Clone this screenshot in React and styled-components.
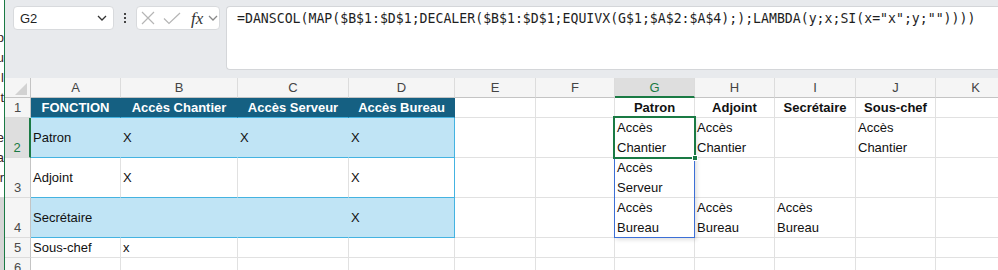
import React from 'react';
import styled, { createGlobalStyle } from 'styled-components';

const Global = createGlobalStyle`
  html, body { margin: 0; padding: 0; background: #fff; overflow: hidden; }
  body { font-family: "Liberation Sans", Arial, sans-serif; }
  * { box-sizing: border-box; }
`;

const Page = styled.div`
  display: flex;
  width: 998px;
  height: 270px;
  overflow: hidden;
`;

const Strip = styled.div`
  width: 5px;
  flex: none;
  display: flex;
  flex-direction: column;
  border-right: 1px solid #1a7a44;
`;

const StripTop = styled.div`
  height: 197px;
  background: #fff;
  overflow: hidden;
`;

const StripBottom = styled.div`
  flex: 1;
  background: #d6d6d6;
`;

const StripText = styled.div`
  width: 14px;
  margin-left: -10px;
  padding-top: 28px;
  text-align: right;
  font-size: 13px;
  line-height: 20px;
  color: #3a1c1c;
`;

const Main = styled.div`
  flex: 1;
  min-width: 0;
  display: flex;
  flex-direction: column;
  overflow: hidden;
`;

const TopBar = styled.div`
  height: 78px;
  flex: none;
  background: #e8eaed;
  display: flex;
  align-items: flex-start;
  padding: 6px 0 0 8px;
`;

const NameBox = styled.div`
  width: 101px;
  height: 24px;
  flex: none;
  background: #fff;
  border: 1px solid #d8dadd;
  border-radius: 4px;
  display: flex;
  align-items: center;
  justify-content: space-between;
  padding: 0 6px 0 6px;
  font-size: 13px;
  color: #1f1f1f;
`;

const MoreDots = styled.div`
  width: 22px;
  height: 24px;
  flex: none;
  display: flex;
  flex-direction: column;
  align-items: center;
  justify-content: center;
  gap: 2px;
`;

const Dot = styled.span`
  width: 2px;
  height: 2px;
  background: #444;
`;

const FxGroup = styled.div`
  width: 84px;
  height: 24px;
  flex: none;
  background: #fff;
  border: 1px solid #d8dadd;
  border-radius: 4px;
  display: flex;
  align-items: center;
  padding-left: 4px;
  gap: 8px;
`;

const FxLabel = styled.span`
  font-family: "Liberation Serif", "Times New Roman", serif;
  font-style: italic;
  font-size: 17px;
  color: #333;
  margin-left: 2px;
  margin-right: -3px;
  line-height: 1;
`;

const FormulaBar = styled.div`
  flex: 1;
  min-width: 0;
  height: 64px;
  margin-left: 6px;
  background: #fff;
  border: 1px solid #d4d6d9;
  border-right: none;
  border-radius: 4px 0 0 4px;
  padding: 2px 0 0 10px;
  font-family: "DejaVu Sans Mono", "Liberation Mono", monospace;
  font-size: 13.2px;
  line-height: 20px;
  white-space: nowrap;
  overflow: hidden;
  color: #1e1e1e;
`;

const Sheet = styled.div`
  display: grid;
  grid-template-columns: 26px 90px 117px 111px 106px 81px 79px 80px 80px 81px 80px 80px;
  grid-template-rows: 20px 20px 40px 40px 40px 20px 20px;
  font-size: 13px;
`;

const Corner = styled.div`
  grid-row: 1;
  grid-column: 1;
  background: #f5f5f5;
  border-right: 1px solid #c4c4c4;
  border-bottom: 1px solid #c4c4c4;
  display: flex;
  align-items: flex-end;
  justify-content: flex-end;
  padding: 0 3px 2px 0;
`;

const ColHeader = styled.div`
  grid-row: 1;
  grid-column: ${(p) => p.$c};
  background: ${(p) => (p.$sel ? '#dedede' : '#f5f5f5')};
  color: ${(p) => (p.$sel ? '#1a7a44' : '#444')};
  border-right: 1px solid #dcdcdc;
  border-bottom: ${(p) => (p.$sel ? '2px solid #1a7a44' : '1px solid #c4c4c4')};
  text-align: center;
  line-height: 19px;
`;

const RowHeader = styled.div`
  grid-row: ${(p) => p.$r};
  grid-column: 1;
  background: ${(p) => (p.$sel ? '#dedede' : '#f5f5f5')};
  color: ${(p) => (p.$sel ? '#1a7a44' : '#4a4a4a')};
  border-right: ${(p) => (p.$sel ? '2px solid #1a7a44' : '1px solid #c4c4c4')};
  border-bottom: 1px solid #dcdcdc;
  display: flex;
  align-items: flex-end;
  justify-content: center;
  line-height: 19px;
`;

const Cell = styled.div`
  grid-row: ${(p) => p.$r};
  grid-column: ${(p) => p.$c};
  background: ${(p) => p.$bg};
  color: ${(p) => p.$color};
  font-weight: ${(p) => (p.$bold ? 700 : 400)};
  border-right: 1px solid ${(p) => p.$vline};
  border-bottom: 1px solid ${(p) => p.$hline};
  display: flex;
  align-items: ${(p) => (p.$wrap ? 'flex-start' : 'center')};
  justify-content: ${(p) => (p.$center ? 'center' : 'flex-start')};
  padding: 0 2px;
  line-height: 20px;
  white-space: ${(p) => (p.$wrap ? 'normal' : 'nowrap')};
  overflow: visible;
  min-width: 0;
`;

const SpillFrame = styled.div`
  grid-row: 3 / 6;
  grid-column: 8;
  margin: -1px 0 0 -1px;
  border: 1px solid #3c6fd6;
  box-shadow: 2px 2px 4px rgba(0, 0, 0, 0.12);
  pointer-events: none;
  z-index: 2;
`;

const Selection = styled.div`
  grid-row: 3;
  grid-column: 8;
  margin: -2px -1px -1px -2px;
  border: 2px solid #1a7a44;
  position: relative;
  pointer-events: none;
  z-index: 3;
`;

const FillHandle = styled.span`
  position: absolute;
  right: -4px;
  bottom: -4px;
  width: 6px;
  height: 6px;
  background: #1a7a44;
  border: 1px solid #fff;
`;

const COLS = ['A', 'B', 'C', 'D', 'E', 'F', 'G', 'H', 'I', 'J', 'K'];

const DARK = '#156082';
const BAND = '#c0e4f5';
const TBORDER = '#44b3e1';
const GRID = '#e1e1e1';

const data = {
  1: { A: 'FONCTION', B: 'Accès Chantier', C: 'Accès Serveur', D: 'Accès Bureau', G: 'Patron', H: 'Adjoint', I: 'Secrétaire', J: 'Sous-chef' },
  2: { A: 'Patron', B: 'X', C: 'X', D: 'X', G: 'Accès Chantier', H: 'Accès Chantier', J: 'Accès Chantier' },
  3: { A: 'Adjoint', B: 'X', D: 'X', G: 'Accès Serveur' },
  4: { A: 'Secrétaire', D: 'X', G: 'Accès Bureau', H: 'Accès Bureau', I: 'Accès Bureau' },
  5: { A: 'Sous-chef', B: 'x' },
  6: {},
};

function cellStyle(r, ci) {
  const inTable = ci <= 3 && r <= 4;
  const s = { bg: '#fff', color: '#111', vline: GRID, hline: GRID, bold: false, center: false };
  if (inTable) {
    if (r === 1) {
      Object.assign(s, { bg: DARK, color: '#fff', vline: DARK, hline: TBORDER, bold: true, center: true });
    } else if (r === 2 || r === 4) {
      Object.assign(s, { bg: BAND, vline: ci === 3 ? TBORDER : BAND, hline: TBORDER });
    } else {
      Object.assign(s, { vline: ci === 3 ? TBORDER : GRID, hline: TBORDER });
    }
  } else if (r === 1 && ci >= 6 && ci <= 9) {
    Object.assign(s, { bold: true, center: true });
  }
  return s;
}

const XIcon = () => (
  <svg width="14" height="14" viewBox="0 0 14 14">
    <path d="M1 1 L13 13 M13 1 L1 13" stroke="#b5b5b5" strokeWidth="1.2" fill="none" />
  </svg>
);

const CheckIcon = () => (
  <svg width="18" height="13" viewBox="0 0 18 13">
    <polyline points="1,6.5 6,11.5 17,1" stroke="#b5b5b5" strokeWidth="1.2" fill="none" />
  </svg>
);

const Chevron = ({ color, w = 10 }) => (
  <svg width={w} height="6" viewBox="0 0 10 6">
    <polyline points="1,1 5,5 9,1" stroke={color} strokeWidth="1.3" fill="none" />
  </svg>
);

const CornerTriangle = () => (
  <svg width="12" height="12" viewBox="0 0 12 12">
    <polygon points="12,0 12,12 0,12" fill="#d2d2d2" />
  </svg>
);

const formula = '=DANSCOL(MAP($B$1:$D$1;DECALER($B$1:$D$1;EQUIVX(G$1;$A$2:$A$4););LAMBDA(y;x;SI(x="x";y;""))))';

export default function App() {
  const rows = [1, 2, 3, 4, 5, 6];
  return (
    <>
      <Global />
      <Page>
        <Strip>
          <StripTop>
            <StripText>
              p<br />u<br />l<br />t<br />
              <br />e<br />a<br />r
            </StripText>
          </StripTop>
          <StripBottom />
        </Strip>
        <Main>
          <TopBar>
            <NameBox>
              <span>G2</span>
              <Chevron color="#333" />
            </NameBox>
            <MoreDots>
              <Dot />
              <Dot />
              <Dot />
            </MoreDots>
            <FxGroup>
              <XIcon />
              <CheckIcon />
              <FxLabel>fx</FxLabel>
              <Chevron color="#888" />
            </FxGroup>
            <FormulaBar>{formula}</FormulaBar>
          </TopBar>
          <Sheet>
            <Corner>
              <CornerTriangle />
            </Corner>
            {COLS.map((c, i) => (
              <ColHeader key={c} $c={i + 2} $sel={c === 'G'}>
                {c}
              </ColHeader>
            ))}
            <ColHeader $c={13} />
            {rows.map((r) => (
              <React.Fragment key={r}>
                <RowHeader $r={r + 1} $sel={r === 2}>
                  {r}
                </RowHeader>
                {COLS.map((c, ci) => {
                  const s = cellStyle(r, ci);
                  const text = data[r][c] || '';
                  return (
                    <Cell
                      key={c}
                      $r={r + 1}
                      $c={ci + 2}
                      $bg={s.bg}
                      $color={s.color}
                      $vline={s.vline}
                      $hline={s.hline}
                      $bold={s.bold}
                      $center={s.center}
                      $wrap={ci >= 6 && r >= 2}
                    >
                      {text}
                    </Cell>
                  );
                })}
              </React.Fragment>
            ))}
            <SpillFrame />
            <Selection>
              <FillHandle />
            </Selection>
          </Sheet>
        </Main>
      </Page>
    </>
  );
}
